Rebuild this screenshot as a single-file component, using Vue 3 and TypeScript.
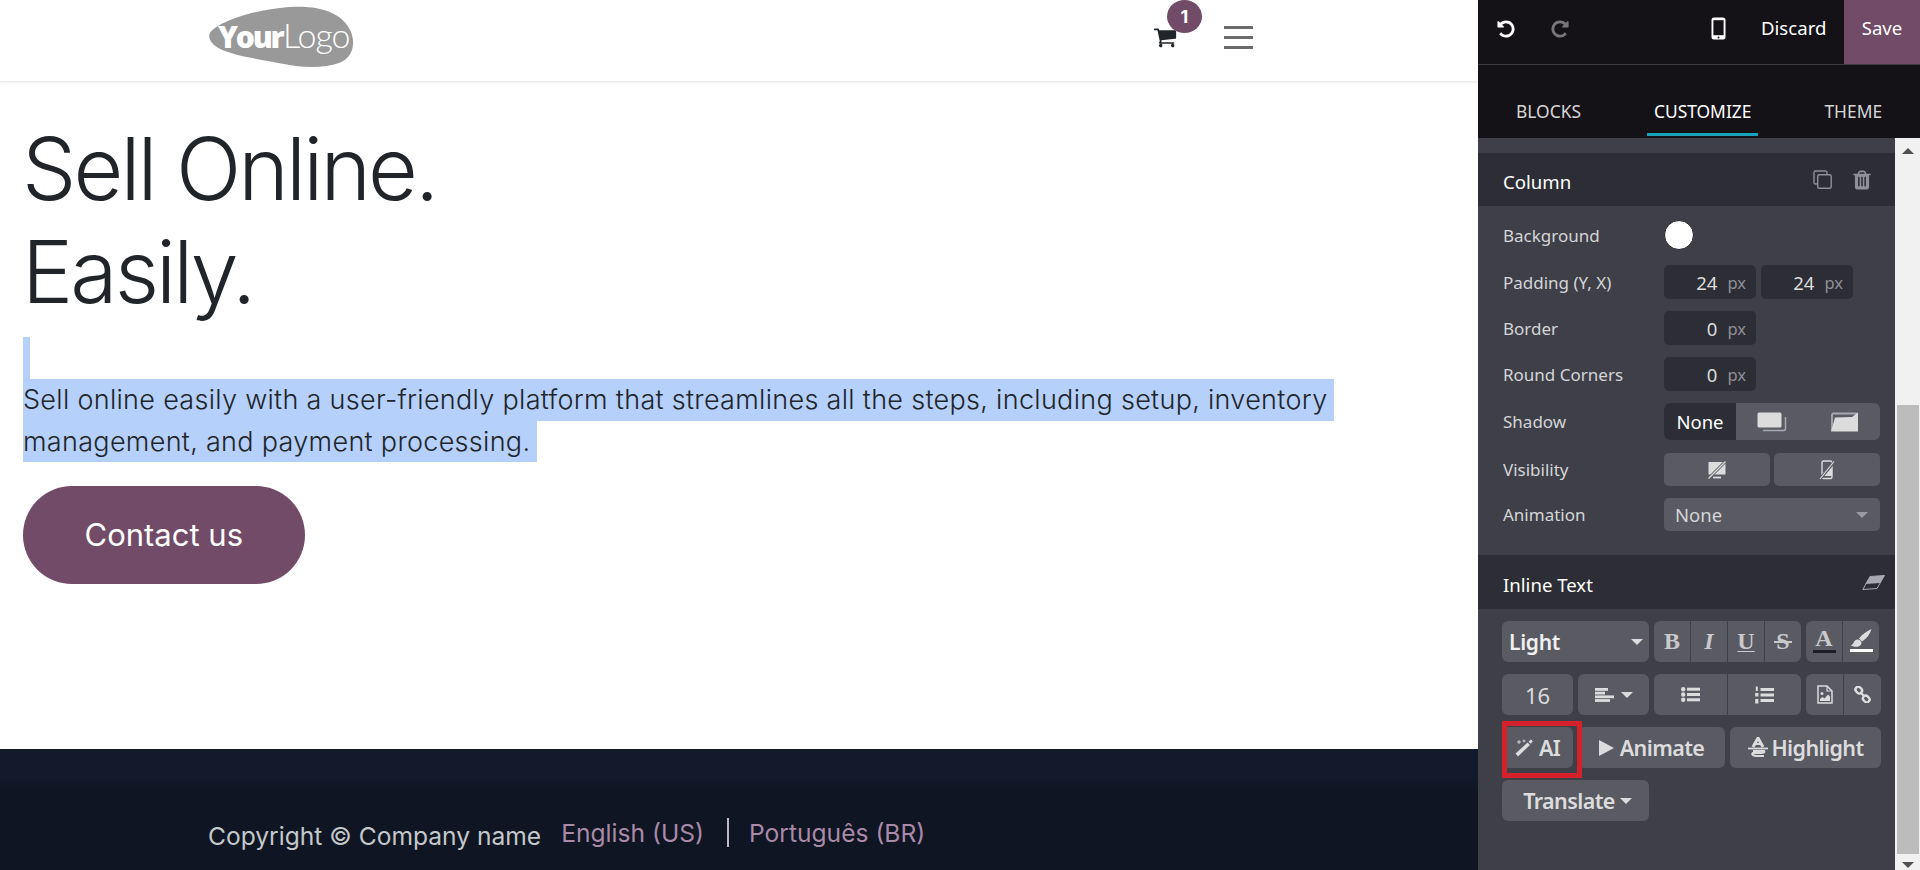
<script setup lang="ts">
const undoPath = 'M1664 896q0 156-61 298t-164 245-245 164-298 61q-172 0-327-72.5t-264-204.5q-7-10-6.5-22.5t8.5-20.5l137-138q10-9 25-9 16 2 23 12 73 95 179 147t225 52q104 0 198.5-40.5t163.5-109.5 109.5-163.5 40.5-198.5-40.5-198.5-109.5-163.5-163.5-109.5-198.5-40.5q-98 0-188 35.5t-160 101.5l137 138q31 30 14 69-17 40-59 40h-448q-26 0-45-19t-19-45v-448q0-42 40-59 39-17 69 14l130 129q107-101 244.5-156.5t284.5-55.5q156 0 298 61t245 164 164 245 61 298z'
const cartPath = 'M704 1536q0 52-38 90t-90 38-90-38-38-90 38-90 90-38 90 38 38 90zm896 0q0 52-38 90t-90 38-90-38-38-90 38-90 90-38 90 38 38 90zm128-1088v512q0 24-16.5 42.5t-40.5 21.5l-1044 122q13 60 13 70 0 16-24 64h920q26 0 45 19t19 45-19 45-45 19h-1024q-26 0-45-19t-19-45q0-11 8-31.5t16-36 21.5-40 15.5-29.5l-177-823h-204q-26 0-45-19t-19-45 19-45 45-19h256q16 0 28.5 6.5t19.5 15.5 13 24.5 8 26 5.5 29.5 4.5 26h1201q26 0 45 19t19 45z'
const trashPath = 'M704 1376v-704q0-14-9-23t-23-9h-64q-14 0-23 9t-9 23v704q0 14 9 23t23 9h64q14 0 23-9t9-23zm256 0v-704q0-14-9-23t-23-9h-64q-14 0-23 9t-9 23v704q0 14 9 23t23 9h64q14 0 23-9t9-23zm256 0v-704q0-14-9-23t-23-9h-64q-14 0-23 9t-9 23v704q0 14 9 23t23 9h64q14 0 23-9t9-23zm-544-992h448l-48-117q-7-9-17-11h-317q-10 2-17 11zm928 32v64q0 14-9 23t-23 9h-96v948q0 83-47 143.5t-113 60.5h-832q-66 0-113-58.5t-47-141.5v-952h-96q-14 0-23-9t-9-23v-64q0-14 9-23t23-9h309l70-167q15-37 54-63t79-26h320q40 0 79 26t54 63l70 167h309q14 0 23 9t9 23z'

const tabs = [
  { label: 'BLOCKS', active: false },
  { label: 'CUSTOMIZE', active: true },
  { label: 'THEME', active: false },
]
</script>

<template>
  <div class="page">
    <main class="site">
      <header class="site-header">
        <svg class="logo" width="146" height="62" viewBox="0 0 146 62">
          <path d="M1 27C6 18 40 4 80 1c32-2 54 6 62 25 5 13 1 26-12 31-14 5-36 5-55 1C50 53 16 49 5 39 1 35-1 31 1 27z" fill="#999" />
          <text x="9" y="42" class="logo-your">Your</text>
          <text x="74" y="42" class="logo-logo">Logo</text>
        </svg>
        <div class="header-icons">
          <div class="cart">
            <svg width="24" height="24" viewBox="0 0 1792 1792"><path :d="cartPath" fill="#212529" /></svg>
            <span class="badge">1</span>
          </div>
          <div class="burger"><i></i><i></i><i></i></div>
        </div>
      </header>

      <section class="hero">
        <h1>Sell Online.<br />Easily.</h1>
        <div class="sel empty"></div>
        <p class="lead">
          <span class="sel line">Sell online easily with a user-friendly platform that streamlines all the steps, including setup, inventory</span><br />
          <span class="sel line">management, and payment processing.</span>
        </p>
        <a class="contact">Contact us</a>
      </section>

      <footer class="site-footer">
        <span class="copyright">Copyright © Company name</span>
        <a class="lang">English (US)</a>
        <span class="divider"></span>
        <a class="lang">Português (BR)</a>
      </footer>
    </main>

    <aside class="editor">
      <div class="topbar">
        <button class="icon-btn undo">
          <svg width="20" height="20" viewBox="0 0 1792 1792"><path :d="undoPath" fill="#fff" /></svg>
        </button>
        <button class="icon-btn redo">
          <svg width="20" height="20" viewBox="0 0 1792 1792"><path :d="undoPath" fill="#77777b" transform="translate(1792 0) scale(-1 1)" /></svg>
        </button>
        <svg class="phone" width="15" height="23" viewBox="0 0 15 23">
          <rect x="0.5" y="0.5" width="14" height="22" rx="2.5" fill="#fff" />
          <rect x="2.4" y="3.2" width="10.2" height="15" fill="#141217" />
          <circle cx="7.5" cy="20.4" r="1" fill="#141217" />
        </svg>
        <span class="discard">Discard</span>
        <span class="save">Save</span>
      </div>

      <nav class="tabs">
        <span v-for="t in tabs" :key="t.label" :class="['tab', { active: t.active }]">{{ t.label }}</span>
      </nav>

      <div class="scroller">
        <div class="panel">
          <div class="section-head">
            <span class="head-title">Column</span>
            <div class="head-icons">
              <svg width="19" height="19" viewBox="0 0 19 19" fill="none" stroke="#8f9095" stroke-width="1.4">
                <path d="M4 14H2.500A1.500 1.500 0 0 1 1 12.500V2.500A1.500 1.500 0 0 1 2.500 1h10A1.500 1.500 0 0 1 14 2.500V4" />
                <rect x="4.700" y="4.700" width="13.500" height="13.500" rx="1.500" />
              </svg>
              <svg width="22" height="22" viewBox="0 0 1792 1792"><path :d="trashPath" fill="#8f9095" /></svg>
            </div>
          </div>

          <div class="rows">
            <div class="row r-bg">
              <label>Background</label>
              <span class="swatch"></span>
            </div>
            <div class="row r-pad">
              <label>Padding (Y, X)</label>
              <span class="num">24<em>px</em></span>
              <span class="num">24<em>px</em></span>
            </div>
            <div class="row r-pad">
              <label>Border</label>
              <span class="num">0<em>px</em></span>
            </div>
            <div class="row r-pad">
              <label>Round Corners</label>
              <span class="num">0<em>px</em></span>
            </div>
            <div class="row r-shadow">
              <label>Shadow</label>
              <div class="shadow-group">
                <span class="shadow-none">None</span>
                <span class="shadow-opt">
                  <svg width="30" height="20" viewBox="0 0 30 20">
                    <path d="M6 18.500h20.500a2 2 0 0 0 2-2V5" fill="none" stroke="#a9aab0" stroke-width="1.500" />
                    <rect x="0.500" y="0.500" width="24" height="15" rx="1.500" fill="#dcdcdc" />
                  </svg>
                </span>
                <span class="shadow-opt">
                  <svg width="27" height="20" viewBox="0 0 27 20">
                    <path d="M1 19V3A1.500 1.500 0 0 1 2.500 1.500H26" fill="none" stroke="#a9aab0" stroke-width="1.800" />
                    <path d="M0 19.500 4 5.500 21 5 27 .5v19z" fill="#dcdcdc" />
                  </svg>
                </span>
              </div>
            </div>
            <div class="row r-vis">
              <label>Visibility</label>
              <span class="vis-btn">
                <svg width="20" height="20" viewBox="0 0 20 20" fill="none" stroke="#dcdcdc">
                  <path d="M1.500 2h17v12.500h-17z" fill="#dcdcdc" stroke="none" />
                  <path d="M6 17.500h8" stroke-width="1.800" />
                  <path d="M1 19 19 1" stroke="#5a5b63" stroke-width="3" />
                  <path d="M1.500 18.500 18.500 1.500" stroke-width="1.300" />
                </svg>
              </span>
              <span class="vis-btn">
                <svg width="16" height="20" viewBox="0 0 16 20" fill="none" stroke="#dcdcdc">
                  <rect x="3" y="1" width="10" height="17.500" rx="1.500" stroke-width="1.400" />
                  <path d="M3 14 13 3v13H5z" fill="#dcdcdc" stroke="none" />
                  <path d="M1 19 15 2" stroke="#5a5b63" stroke-width="3" />
                  <path d="M1 19 15 1.500" stroke-width="1.200" />
                </svg>
              </span>
            </div>
            <div class="row r-anim">
              <label>Animation</label>
              <span class="select">None<i class="caret dim"></i></span>
            </div>
          </div>

          <div class="section-head inline-head">
            <span class="head-title">Inline Text</span>
            <svg class="eraser" width="23" height="15" viewBox="0 0 23 15">
              <path d="M8 1.500 22.500 .5 15 13.500 .8 14.500z" fill="none" stroke="#a9aab0" stroke-width="1" />
              <path d="M8 1.500 22.500 .5 18 8 3.500 9z" fill="#a9aab0" />
            </svg>
          </div>

          <div class="toolbar">
            <div class="tb-row">
              <span class="btn w147 font-select">Light<i class="caret"></i></span>
              <div class="seg w147">
                <span class="serif">B</span>
                <span class="serif it">I</span>
                <span class="serif un">U</span>
                <span class="serif st">S</span>
              </div>
              <div class="seg w73">
                <span class="color-btn"><b class="serif">A</b><u class="bar dark"></u></span>
                <span class="color-btn">
                  <svg width="22" height="19" viewBox="0 0 22 19"><path d="M21.500 0C17 2 12 5.500 9 9.500l3 3c4-2.500 8-7 9.500-12.500zM8 10.500c-3 0-4 2-4.500 3.500-.5 1.500-2 2-3 2 2.500 2.500 10.500 3 11-2 0-1.500-1-3-3.500-3.500z" fill="#dcdcdc" /></svg>
                  <u class="bar"></u>
                </span>
              </div>
            </div>

            <div class="tb-row">
              <span class="btn w71 size">16</span>
              <span class="btn w71 align">
                <svg width="19" height="14" viewBox="0 0 19 14" fill="#dcdcdc"><rect width="13" height="2.800" /><rect y="3.700" width="10" height="2.800" /><rect y="7.400" width="19" height="2.800" /><rect y="11.100" width="15" height="2.800" /></svg>
                <i class="caret"></i>
              </span>
              <div class="seg w147">
                <span>
                  <svg width="19" height="15" viewBox="0 0 19 15" fill="#dcdcdc"><circle cx="2.200" cy="2.200" r="2.200" /><circle cx="2.200" cy="7.500" r="2.200" /><circle cx="2.200" cy="12.800" r="2.200" /><rect x="6" y=".7" width="13" height="3" /><rect x="6" y="6" width="13" height="3" /><rect x="6" y="11.300" width="13" height="3" /></svg>
                </span>
                <span>
                  <svg width="19" height="18" viewBox="0 0 19 18" fill="#dcdcdc"><rect x="0.800" y="0.500" width="2" height="4.500" /><rect x="0.200" y="7" width="3.200" height="3.500" /><rect x="0.200" y="13" width="3.200" height="4.500" /><rect x="5.500" y="2" width="13.500" height="3" /><rect x="5.500" y="7.500" width="13.500" height="3" /><rect x="5.500" y="13" width="13.500" height="3" /></svg>
                </span>
              </div>
              <div class="seg w75">
                <span>
                  <svg width="16" height="19" viewBox="0 0 16 19"><path d="M1 1h9l5 5v12H1z" fill="none" stroke="#dcdcdc" stroke-width="1.500" /><path d="M10 1v5h5" fill="none" stroke="#dcdcdc" stroke-width="1.200" /><circle cx="5" cy="8.500" r="1.500" fill="#dcdcdc" /><path d="M3 16v-2l2.500-2 2 1.500 3.500-4 2 2v4.500z" fill="#dcdcdc" /></svg>
                </span>
                <span>
                  <svg width="17" height="17" viewBox="0 0 17 17" fill="none" stroke="#dcdcdc" stroke-width="2.400"><rect x="1.300" y="1.300" width="7" height="5.500" rx="2.700" transform="rotate(45 4.800 4)" /><rect x="8.700" y="10.200" width="7" height="5.500" rx="2.700" transform="rotate(45 12.200 13)" /><path d="M6.500 6.500l4 4" /></svg>
                </span>
              </div>
            </div>

            <div class="tb-row">
              <span class="btn big w71 ai">
                <svg width="18" height="18" viewBox="0 0 18 18" fill="#dcdcdc"><path d="M.5 14.500 12.500 3.500l2.500 2.500L3 17.500z" /><path d="M13.500 2.800 16 .5l1.800 1.800-2 2.500z" /><path d="M4 1v4M2 3h4M9 .5v3M7.500 2h3" stroke="#dcdcdc" stroke-width=".9" fill="none" /></svg>
                AI
              </span>
              <span class="btn big w147">
                <svg width="15" height="16" viewBox="0 0 15 16"><path d="M0 0 15 8 0 16z" fill="#dcdcdc" /></svg>
                Animate
              </span>
              <span class="btn big w151 hl">
                <svg width="22" height="21" viewBox="0 0 22 21" fill="none" stroke="#dcdcdc">
                  <path d="M6 10 11 1l5 9" stroke-width="3" />
                  <path d="M8 7h6" stroke-width="2" />
                  <path d="M1 11.500h20" stroke-width="1.800" />
                  <path d="M6 14h11c1 1 0 2-3 2H6c-2 1 0 3 4 3h7" stroke-width="2" />
                </svg>
                Highlight
              </span>
            </div>

            <div class="tb-row">
              <span class="btn big w147 translate">Translate<i class="caret"></i></span>
            </div>
            <span class="ai-mark"></span>
          </div>
        </div>

        <div class="scrollbar">
          <i class="arrow up"></i>
          <div class="track"><div class="thumb"></div></div>
          <i class="arrow down"></i>
        </div>
      </div>
    </aside>
  </div>
</template>

<style scoped>
.page {
  display: flex;
  width: 1920px;
  height: 870px;
  overflow: hidden;
  background: #fff;
}
.site {
  width: 1478px;
  flex-shrink: 0;
  display: flex;
  flex-direction: column;
  font-family: Inter, "Liberation Sans", sans-serif;
  color: #212529;
}
.site-header {
  height: 81px;
  flex-shrink: 0;
  display: flex;
  align-items: flex-start;
  justify-content: space-between;
  box-shadow: 0 1px 3px rgba(0, 0, 0, 0.12);
  padding: 6px 225px 0 209px;
  box-sizing: border-box;
}
.logo-your {
  font: 800 30px "Open Sans", "Liberation Sans", sans-serif;
  letter-spacing: -2.2px;
  fill: #fff;
}
.logo-logo {
  font: 300 34px Lato, "Liberation Sans", sans-serif;
  letter-spacing: -1px;
  fill: #fff;
}
.header-icons {
  display: flex;
  align-items: flex-start;
  gap: 47px;
  margin-top: -6px;
}
.cart {
  position: relative;
  margin-top: 25px;
  height: 24px;
}
.badge {
  position: absolute;
  left: 14px;
  top: -25px;
  width: 35px;
  height: 33px;
  border-radius: 50%;
  background: #714b67;
  color: #fff;
  font-size: 18px;
  font-weight: 700;
  display: flex;
  align-items: center;
  justify-content: center;
}
.burger {
  display: flex;
  flex-direction: column;
  gap: 7.500px;
  margin-top: 26px;
  width: 29px;
}
.burger i {
  display: block;
  height: 2.500px;
  background: #6b6b6b;
}
.hero {
  flex: 1;
  padding: 37px 0 0 23px;
}
h1 {
  margin: 0 0 0 -1px;
  font-size: 86px;
  font-weight: 300;
  line-height: 103px;
  letter-spacing: -2.9px;
}
.sel {
  background: #b4d0fb;
}
.empty {
  width: 7px;
  height: 42px;
  margin-top: 13px;
}
.lead {
  margin: 0;
  font-size: 27px;
  font-weight: 300;
  line-height: 41.500px;
  letter-spacing: 0.3px;
}
.line {
  display: inline-block;
  padding-right: 7px;
}
.contact {
  display: inline-block;
  margin-top: 24px;
  padding: 0 61.500px;
  height: 98px;
  line-height: 98px;
  border-radius: 49px;
  background: #714b67;
  color: #fff;
  font-size: 31px;
}
.site-footer {
  height: 121px;
  flex-shrink: 0;
  box-sizing: border-box;
  background: linear-gradient(#121a2b 0, #121a2b 30px, #0f1522 40px);
  padding: 69px 0 0 208px;
  display: flex;
  align-items: flex-start;
  font-size: 24.600px;
}
.copyright {
  color: #c4c7cb;
  margin-top: 3px;
  margin-right: 20px;
}
.lang {
  color: #a98aa9;
}
.divider {
  width: 2px;
  height: 29px;
  background: #c4b5c4;
  margin: 0 20px 0 23px;
}

.editor {
  width: 442px;
  flex-shrink: 0;
  display: flex;
  flex-direction: column;
  background: #141217;
  font-family: "Noto Sans", "Open Sans", sans-serif;
  color: #e4e4e4;
}
.topbar {
  height: 65px;
  flex-shrink: 0;
  box-sizing: border-box;
  border-bottom: 1px solid #3a3a3f;
  display: flex;
  align-items: center;
  font-size: 18.600px;
}
.icon-btn {
  border: 0;
  background: none;
  padding: 0;
  display: flex;
  margin-top: -6px;
}
.undo { margin-left: 18px; }
.redo { margin-left: 34px; }
.phone {
  margin-left: 141px;
  margin-top: -8px;
}
.discard {
  margin-left: 35px;
  margin-top: -9px;
  color: #fff;
}
.save {
  margin-left: auto;
  width: 76px;
  height: 64px;
  padding-bottom: 9px;
  box-sizing: border-box;
  background: #714b67;
  color: #fff;
  display: flex;
  align-items: center;
  justify-content: center;
}
.tabs {
  height: 73px;
  flex-shrink: 0;
  box-sizing: border-box;
  display: flex;
  gap: 66px;
  padding: 0 0 2px 38px;
  align-items: flex-end;
  font-size: 17.400px;
  color: #d6d6d6;
}
.tab {
  height: 48px;
  line-height: 46px;
  box-sizing: border-box;
}
.tab.active {
  color: #fff;
  border-bottom: 3px solid #17a2b8;
  padding: 0 7px;
}
.scroller {
  flex: 1;
  display: flex;
  min-height: 0;
}
.panel {
  width: 417px;
  flex-shrink: 0;
  background: #3e3f47;
  padding-top: 15px;
  box-sizing: border-box;
  font-size: 16px;
}
.section-head {
  height: 53px;
  background: #2d2e35;
  display: flex;
  align-items: center;
  justify-content: space-between;
  padding: 0 22px 0 25px;
  font-size: 18.600px;
  color: #fff;
}
.head-title {
  padding-top: 4px;
}
.head-icons {
  display: flex;
  align-items: center;
  gap: 19px;
}
.rows {
  padding: 14px 15px 24px 25px;
  height: 349px;
  box-sizing: border-box;
}
.row {
  display: flex;
  align-items: center;
  gap: 5px;
}
.row label {
  width: 156px;
  color: #d5d5d8;
  font-size: 17px;
  flex-shrink: 0;
}
.r-bg { height: 30px; margin-top: 0; }
.r-pad { height: 34px; margin-top: 12px; }
.r-pad:nth-child(2) { margin-top: 15px; }
.r-shadow { height: 37px; margin-top: 12px; }
.r-vis { height: 33px; margin-top: 13px; gap: 4px; }
.r-vis label { margin-right: 1px; }
.r-anim { height: 33px; margin-top: 12px; }
.swatch {
  width: 28px;
  height: 28px;
  border-radius: 50%;
  background: #fff;
  border: 1px solid #222;
}
.num {
  width: 92px;
  height: 34px;
  box-sizing: border-box;
  background: #2d2e35;
  border-radius: 5px;
  color: #dcdcdc;
  font-size: 18.500px;
  display: flex;
  align-items: center;
  justify-content: flex-end;
  padding-right: 10px;
}
.num em {
  font-style: normal;
  color: #8f9095;
  font-size: 16.500px;
  margin-left: 10px;
}
.shadow-group {
  width: 216px;
  height: 37px;
  border-radius: 6px;
  overflow: hidden;
  background: #595a62;
  display: flex;
}
.shadow-none {
  width: 72px;
  background: #2d2e35;
  color: #fff;
  font-size: 18.500px;
  display: flex;
  align-items: center;
  justify-content: center;
}
.shadow-opt {
  width: 72px;
  display: flex;
  align-items: center;
  justify-content: center;
}
.vis-btn {
  width: 106px;
  height: 33px;
  background: #595a62;
  border-radius: 5px;
  display: flex;
  align-items: center;
  justify-content: center;
}
.select {
  width: 216px;
  height: 33px;
  box-sizing: border-box;
  background: #595a62;
  border-radius: 5px;
  padding: 0 12px 0 11px;
  color: #d5d5d8;
  font-size: 18.500px;
  display: flex;
  align-items: center;
  justify-content: space-between;
}
.caret {
  display: inline-block;
  width: 0;
  height: 0;
  border-left: 6px solid transparent;
  border-right: 6px solid transparent;
  border-top: 6px solid #dcdcdc;
}
.caret.dim { border-top-color: #9a9ba0; }
.inline-head {
  height: 54px;
  padding-right: 10px;
}
.toolbar {
  position: relative;
  padding: 12px 0 0 24px;
}
.tb-row {
  display: flex;
  gap: 5px;
  height: 41px;
  margin-bottom: 12px;
  color: #dcdcdc;
}
.w71 { width: 71px; }
.w73 { width: 73px; }
.w75 { width: 75px; }
.w147 { width: 147px; }
.w151 { width: 151px; }
.btn {
  background: #595a62;
  border-radius: 6px;
  display: flex;
  align-items: center;
  justify-content: center;
  box-sizing: border-box;
}
.big {
  font-size: 21.500px;
  font-weight: 600;
  letter-spacing: -0.6px;
  gap: 6px;
}
.hl { gap: 2px; }
.font-select {
  justify-content: space-between;
  padding: 0 6px 0 7px;
  font-size: 21px;
  font-weight: 600;
  letter-spacing: -0.3px;
  color: #f0f0f0;
}
.size {
  font-size: 22px;
}
.align { gap: 7px; }
.seg {
  display: flex;
  border-radius: 6px;
  overflow: hidden;
  gap: 1px;
}
.seg > span {
  flex: 1;
  background: #595a62;
  display: flex;
  align-items: center;
  justify-content: center;
  position: relative;
}
.serif {
  font-family: "Liberation Serif", serif;
  font-size: 24px;
  font-weight: 700;
  color: #c9c9cc;
}
.it { font-style: italic; }
.un { text-decoration: underline; text-decoration-thickness: 1px; text-underline-offset: 2px; }
.seg > .st::after {
  content: "";
  position: absolute;
  left: 9px;
  right: 9px;
  top: 20px;
  height: 2px;
  background: #c9c9cc;
}
.seg .color-btn {
  flex-direction: column;
  gap: 0;
  padding-bottom: 3px;
}
.color-btn b {
  line-height: 21px;
}
.bar {
  display: block;
  width: 23px;
  height: 3px;
  margin-top: 1px;
  background: #fff;
}
.bar.dark { background: #1d1e22; }
.translate { gap: 5px; padding-left: 4px; }
.ai-mark {
  position: absolute;
  left: 24px;
  top: 112px;
  width: 80px;
  height: 57px;
  box-sizing: border-box;
  border: 5px solid #d4212a;
}
.scrollbar {
  flex: 1;
  background: #f1f1f1;
  display: flex;
  flex-direction: column;
  align-items: center;
}
.track {
  flex: 1;
  width: 100%;
  padding: 261px 1px 0 2px;
  box-sizing: border-box;
  display: flex;
  flex-direction: column;
}
.thumb {
  flex: 1;
  background: #bcbcbc;
}
.arrow {
  flex-shrink: 0;
  width: 0;
  height: 0;
  border-left: 6px solid transparent;
  border-right: 6px solid transparent;
}
.arrow.up {
  border-bottom: 6px solid #505050;
  margin: 10px 0 -10px;
}
.arrow.down {
  border-top: 6px solid #505050;
  margin: 8px 0 2px;
}
</style>

<style>
html, body {
  margin: 0;
  overflow: hidden;
  background: #fff;
}
</style>
